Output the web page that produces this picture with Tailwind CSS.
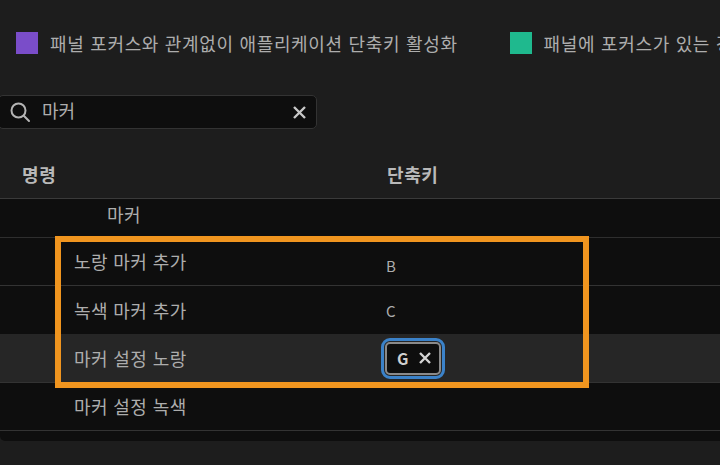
<!DOCTYPE html>
<html lang="ko">
<head>
    <meta charset="UTF-8">
    <title>단축키</title>
    <script src="https://cdn.jsdelivr.net/npm/@tailwindcss/browser@4"></script>
</head>
<body class="bg-[#1d1d1d] font-['Noto_Sans_CJK_KR','Noto_Sans',sans-serif] text-[#adadad] overflow-hidden">
    <div class="relative w-[720px] h-[465px] overflow-hidden">
        <!-- Legend -->
        <div class="flex items-center pl-4 pt-8 h-[54px] whitespace-nowrap text-[18px] tracking-[0.67px]">
            <span class="w-[22px] h-[22px] bg-[#7a4dc9] shrink-0"></span>
            <span class="ml-3">패널 포커스와 관계없이 애플리케이션 단축키 활성화</span>
            <span class="w-[22px] h-[22px] bg-[#1fb98e] shrink-0 ml-[52px]"></span>
            <span class="ml-3">패널에 포커스가 있는 경우 단축키 활성화</span>
        </div>

        <!-- Search -->
        <div class="flex items-center mt-[41px] ml-[-2px] w-[319px] h-[34px] bg-[#0e0e0e] border border-[#333] rounded-[5px]">
            <svg class="ml-[10px] shrink-0" width="22" height="22" viewBox="0 0 22 22" fill="none" stroke="#b4b4b4" stroke-width="2" stroke-linecap="round"><circle cx="9.5" cy="9.5" r="7"/><path d="M14.8 14.8L20 20"/></svg>
            <span class="ml-[11px] mt-[-4px] text-[18px] leading-none">마커</span>
            <svg class="ml-auto mr-[10px]" width="13" height="13" viewBox="0 0 13 13" stroke="#c8c8c8" stroke-width="2.4"><path d="M1 1L12 12M12 1L1 12"/></svg>
        </div>

        <!-- Table header -->
        <div class="flex items-center h-[69px] pt-[22px] font-bold text-[18px] tracking-[0.6px] text-[#b9b9b9]">
            <span class="pl-[22px] w-[387px]">명령</span>
            <span>단축키</span>
        </div>

        <!-- Rows -->
        <div class="bg-[#0e0e0e] border-t border-[#3a3a3a] h-[243px] rounded-bl-[5px] text-[18px] tracking-[0.4px]">
            <div class="flex items-center h-[39px] pb-[7px] border-b border-[#2e2e2e]">
                <span class="pl-[107px]">마커</span>
            </div>
            <div class="flex items-center h-[48px] border-b border-[#333]">
                <span class="pl-[74px] w-[386px]">노랑 마커 추가</span>
                <span class="text-[15px] mt-[9px]">B</span>
            </div>
            <div class="flex items-center h-[48px]">
                <span class="pl-[74px] w-[386px]">녹색 마커 추가</span>
                <span class="text-[15px] mt-[2px]">C</span>
            </div>
            <div class="flex items-center h-[49px] bg-[#262626] border-b border-[#333]">
                <span class="pl-[74px] w-[387px]">마커 설정 노랑</span>
                <div class="ml-[-6px] rounded-[9px] border-[3px] border-[#3b82c9] p-[1px]">
                    <div class="flex items-center gap-[10px] w-[56px] h-[33px] pl-[10px] rounded-[5px] bg-[#0e0e0e] border-2 border-[#8a8a8a] text-[16px] font-bold text-[#d0d0d0]">
                        <span>G</span>
                        <svg width="12" height="12" viewBox="0 0 12 12" stroke="#d4d4d4" stroke-width="2.4"><path d="M1 1L11 11M11 1L1 11"/></svg>
                    </div>
                </div>
            </div>
            <div class="flex items-center h-[48px] border-b border-[#333]">
                <span class="pl-[74px]">마커 설정 녹색</span>
            </div>
        </div>

        <!-- Orange callout -->
        <div class="absolute left-[55px] top-[236px] w-[534px] h-[152px] border-[6px] border-[#f0951f]"></div>
    </div>
</body>
</html>
